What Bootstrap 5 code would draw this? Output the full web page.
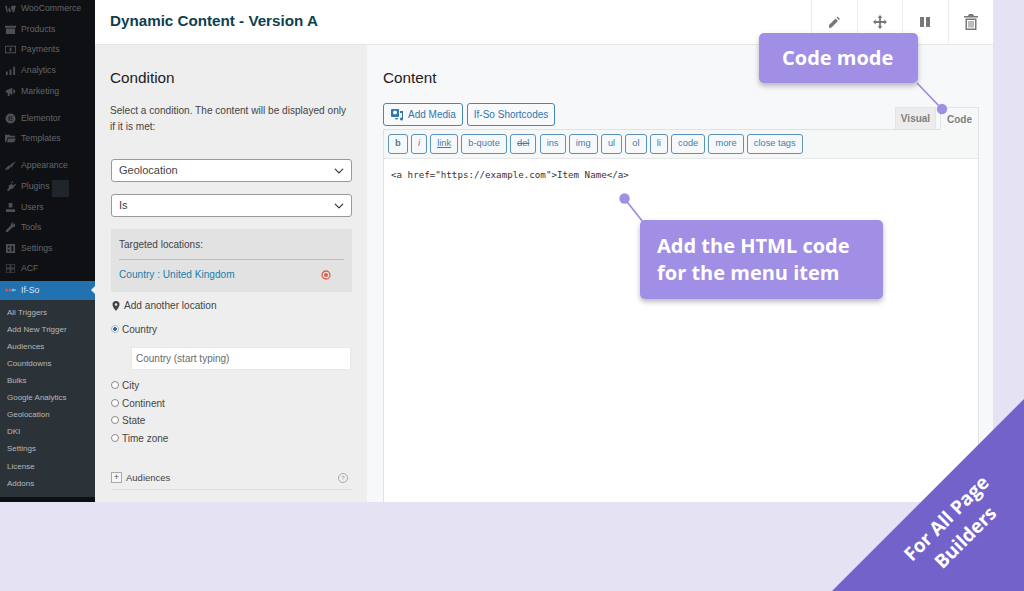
<!DOCTYPE html>
<html lang="en">
<head>
<meta charset="utf-8">
<title>Dynamic Content</title>
<link href="https://cdn.jsdelivr.net/npm/bootstrap@5.3.0/dist/css/bootstrap.min.css" rel="stylesheet">
<style>
html,body{height:100%}
body{margin:0;width:1024px;height:591px;overflow:hidden;background:#e4e2f3;font-family:"Liberation Sans",Arial,sans-serif;position:relative}
.shot{width:993px;height:502px;overflow:hidden}
.wpside{width:95px;background:#0e1013;font-size:8.7px;color:#62666b;flex:none}
.wpitem{height:20.6px;padding-left:5px;gap:5px}
.wpitem svg{width:11px;height:11px;flex:none;fill:#4c5054}
.wpsep{height:6.5px}
.wptop{margin-top:-3px;padding-top:1.500px}
.wpcur{height:19px;background:#2271b1;color:#dfe9f2;padding-left:5px;gap:5px;position:relative;margin-top:1.500px;font-size:8.7px}
.wpcur::after{content:"";position:absolute;right:0;top:5px;border:4px solid transparent;border-right-color:#f0f0f0;border-left:0}
.wpsub{background:#2c3338;padding:4px 0 5px 7px;color:#b4b9be;font-size:8px}
.wpsub div{height:17.1px;line-height:17.1px;white-space:nowrap}
.wpgap{position:absolute;left:52px;top:180px;width:17px;height:17px;background:#1f252b}
.mainarea{min-width:0}
.headbar{height:45px;background:#fff;border-bottom:1px solid #e6e6e6}
.titletext{font-size:15.2px;font-weight:700;color:#0d3f4f;margin:0 0 2px 15px;line-height:1}
.toolcell{width:45.5px;border-left:1px solid #ededed}
.toolcell svg{width:14px;height:14px;fill:#777}
.leftpane{width:272px;background:#eee;padding:24px 15px 0 15px;flex:none;color:#444}
.panehead{font-size:15.3px;font-weight:400;color:#1d1d1d;line-height:18px;margin:0}
.intro{font-size:10.1px;line-height:16px;margin:16px 0 24px;color:#444}
.selbox.form-select{font-size:11px;height:23px;line-height:1;padding:0 24px 0 7px;border:1px solid #9a9a9a;border-radius:3px;color:#444;background-size:12px 10px;background-position:right 6px center;margin-bottom:12px;width:241px;margin-left:1px}
.targetbox{background:#e2e2e2;height:63px;padding:9px 8px 0;width:241px;font-size:10px;margin:0 0 7px 1px}
.targetline{height:22px;border-bottom:1px solid #bdbdbd;line-height:14px}
.targetrow{color:#1a7ea8;height:29px;padding-right:13px;font-size:10.1px}
.addloc{font-size:10.1px;gap:4px;padding-left:2px;height:14px;margin:1px 0 9px}
.radiorow{font-size:10px;height:17.6px;gap:3px;padding-left:1px}
.radiorow .form-check-input{width:8px;height:8px;margin:3px 0 0;border-color:#8a8a8a;background-color:#fff;flex:none}
.radiorow .form-check-input:checked[type=radio]{background-color:#fff;border-color:#a9b4bf;background-image:radial-gradient(circle,#2271b1 0 42%,#fff 50%);background-size:100%}
.locinput.form-control{width:220px;height:23px;margin:7px 0 8.4px 21px;font-size:10px;padding:0 4px;border:1px solid #e8e8e8;border-radius:0;color:#666}
.locinput::placeholder{color:#6a6a6a}
.accord{border-bottom:1px solid #dedede;height:21px;margin:21px 0 0 1px;font-size:9.5px;gap:4px;width:241px;padding-bottom:3px}
.plusbox{width:11px;height:11px;border:1px solid #aaa;font-size:9px;line-height:9px;text-align:center;color:#555;background:#f5f5f5}
.helpdot{width:10px;height:10px;border:1px solid #aaa;border-radius:50%;font-size:6px;line-height:8px;text-align:center;color:#999;margin-left:auto;margin-right:4px}
.rightpane{background:#f7f8f9;padding:24px 14px 0 16px;min-width:0}
.mediabtn.btn{font-size:10px;height:23px;padding:0 6px;border:1px solid #4689b9;border-radius:3px;color:#2e76ad;background:#f8f9fa;gap:4px;line-height:1}
.medialine{gap:4px;margin-top:16px;height:23px}
.tablabel{font-size:10px;color:#808080;font-weight:700;height:22px;padding:0 5px}
.tabsbar{height:26px;margin-top:-23px;position:relative;gap:4px;align-items:flex-end}
.tabv{background:#ececec;border:1px solid #e4e4e4;border-bottom:0;width:41px}
.tabc{background:#f7f8f9;border:1px solid #e2e4e7;border-bottom:0;width:39px;margin-bottom:-1px;height:23px}
.editorwrap{border:1px solid #dfe2e5;border-bottom:0;height:374px;background:#fff;margin-top:0}
.edittools{background:#f6f7f7;border-bottom:1px solid #e6e7e8;height:29px;padding:4px 0 0 4px;gap:3.2px}
.edbtn.btn{height:20px;font-size:9.3px;padding:0 6px;border:1px solid #5b93bb;border-radius:3px;color:#3f7fae;background:#f7f8f9;line-height:1}
.codearea{font-family:"DejaVu Sans Mono","Liberation Mono",monospace;font-size:9.2px;color:#333;padding:9px 7px;white-space:pre}
.noteover{position:absolute;background:#a08fe5;color:#fff;font-family:"Open Sans","Noto Sans",sans-serif;font-weight:700;border-radius:5px;box-shadow:0 3px 5px rgba(70,60,90,.35);font-size:20px}
.notecode{left:759px;top:33px;width:159px;height:50px;padding-left:23px;line-height:50px}
.notehtml{left:640px;top:220px;width:243px;height:79px;padding:12px 0 0 17px;line-height:27px}
.leaders{position:absolute;left:0;top:0;width:1024px;height:591px}
.cornerflag{position:absolute;left:0;top:0;width:1024px;height:591px}
.flagtext{position:absolute;left:876px;top:501px;width:160px;text-align:center;color:#fff;font-family:"Open Sans","Noto Sans",sans-serif;font-weight:700;font-size:19px;line-height:27px;transform:rotate(-45deg)}
</style>
</head>
<body>
<div class="shot d-flex">
  <aside class="wpside position-relative">
    <div class="wptop">
    <div class="wpitem d-flex align-items-center"><svg viewBox="0 0 12 12"><path d="M0 3h2l1 6 2-5 1 5 1-6h5l-2 7H8.500L7.500 6 6 10H4.500L3.500 6 3 10H2z"/></svg>WooCommerce</div>
    <div class="wpitem d-flex align-items-center"><svg viewBox="0 0 12 12"><path d="M0 2h12v2H0zM1 5h10v6H1z"/></svg>Products</div>
    <div class="wpitem d-flex align-items-center"><svg viewBox="0 0 12 12"><path d="M0 2h12v8H0zM1 3v6h10V3zM5 4h2v4H5z"/></svg>Payments</div>
    <div class="wpitem d-flex align-items-center"><svg viewBox="0 0 12 12"><path d="M1 7h2v4H1zM5 5h2v6H5zM9 2h2v9H9z"/></svg>Analytics</div>
    <div class="wpitem d-flex align-items-center"><svg viewBox="0 0 12 12"><path d="M1 5l7-3v8L5 8v3H3V7.500L1 7zM9 4h2v4H9z"/></svg>Marketing</div>
    <div class="wpsep"></div>
    <div class="wpitem d-flex align-items-center"><svg viewBox="0 0 12 12"><path fill-rule="evenodd" d="M6 .5a5.500 5.500 0 1 0 0 11 5.500 5.500 0 0 0 0-11zM4 3.500h1v5H4zM6 3.500h2v1H6zM6 5.500h2v1H6zM6 7.500h2v1H6z"/></svg>Elementor</div>
    <div class="wpitem d-flex align-items-center"><svg viewBox="0 0 12 12"><path d="M0 2h5l1 1h5v2H3L1 10H0zM3.500 6H12l-2 4H2z"/></svg>Templates</div>
    <div class="wpsep"></div>
    <div class="wpitem d-flex align-items-center"><svg viewBox="0 0 12 12"><path d="M12 1L6 5 5 7 7 8zM4 6 1 9l-1 2 4-1 2-2z"/></svg>Appearance</div>
    <div class="wpitem d-flex align-items-center"><svg viewBox="0 0 12 12"><path d="M8 0l1 1-2 2 2 2 2-2 1 1-2 2-1 2-3 1-2 2-2-1 2-2 0-3 2-1z"/></svg>Plugins</div>
    <div class="wpitem d-flex align-items-center"><svg viewBox="0 0 12 12"><path d="M4 1h4v5H4zM1 8h10v3H1z"/></svg>Users</div>
    <div class="wpitem d-flex align-items-center"><svg viewBox="0 0 12 12"><path d="M11 1L9 3 8 2l2-2-3 1-1 3-5 5v2h2l5-5 3-1z"/></svg>Tools</div>
    <div class="wpitem d-flex align-items-center"><svg viewBox="0 0 12 12"><path fill-rule="evenodd" d="M1 1h10v10H1zM3 3v2h2V3zM7 3v6h2V3zM3 7v2h2V7z"/></svg>Settings</div>
    <div class="wpitem d-flex align-items-center"><svg viewBox="0 0 12 12"><path fill-rule="evenodd" d="M1 1h10v10H1zM2 2v3h3V2zM7 2v3h3V2zM2 7v3h3V7zM7 7v3h3V7z" opacity=".7"/></svg>ACF</div>
    </div>
    <div class="wpcur d-flex align-items-center"><svg width="11" height="6" viewBox="0 0 11 6"><circle cx="1.500" cy="3" r="1.500" fill="#d9534f"/><circle cx="5" cy="3" r="1.500" fill="#d9534f"/><circle cx="8" cy="3" r="1.500" fill="#5bc0de"/><circle cx="10" cy="3" r="1" fill="#5bc0de"/></svg><span>If-So</span></div>
    <div class="wpsub">
      <div>All Triggers</div><div>Add New Trigger</div><div>Audiences</div><div>Countdowns</div><div>Bulks</div><div>Google Analytics</div><div>Geolocation</div><div>DKI</div><div>Settings</div><div>License</div><div>Addons</div>
    </div>
    <div class="wpgap"></div>
  </aside>
  <div class="mainarea flex-grow-1 d-flex flex-column">
    <header class="headbar d-flex align-items-stretch flex-shrink-0">
      <div class="flex-grow-1 d-flex align-items-center"><h1 class="titletext">Dynamic Content - Version A</h1></div>
      <div class="toolcell d-flex align-items-center justify-content-center"><svg viewBox="0 0 14 14"><path d="M2 10l6.500-6.500 2.500 2.500L4.500 12.500 2 13zM9.500 2.500l1-1 2.500 2.500-1 1z"/></svg></div>
      <div class="toolcell d-flex align-items-center justify-content-center"><svg viewBox="0 0 14 14"><path d="M7 0l2.500 2.700H7.900v3.400h3.400V4.500L14 7l-2.700 2.500V7.900H7.900v3.400h1.600L7 14l-2.500-2.700h1.600V7.900H2.700v1.600L0 7l2.700-2.500v1.600h3.400V2.700H4.500z"/></svg></div>
      <div class="toolcell d-flex align-items-center justify-content-center"><svg viewBox="0 0 14 14"><path d="M2 2h4v10H2zM8 2h4v10H8z"/></svg></div>
      <div class="toolcell d-flex align-items-center justify-content-center"><svg viewBox="0 0 14 16" style="width:14px;height:16px"><path fill-rule="evenodd" d="M5 0h4l1 2h4v1.500H0V2h4zM1.500 4.500h11V16h-11zM3 6v8.500h8V6zM4.500 7h1v6.500h-1zM6.500 7h1v6.500h-1zM8.500 7h1v6.500h-1z"/></svg></div>
    </header>
    <div class="d-flex flex-grow-1">
      <section class="leftpane">
        <h2 class="panehead">Condition</h2>
        <p class="intro">Select a condition. The content will be displayed only if it is met:</p>
        <select class="form-select selbox"><option>Geolocation</option></select>
        <select class="form-select selbox"><option>Is</option></select>
        <div class="targetbox">
          <div class="targetline">Targeted locations:</div>
          <div class="targetrow d-flex align-items-center justify-content-between"><span>Country : United Kingdom</span>
            <svg width="10" height="10" viewBox="0 0 10 10"><circle cx="5" cy="5" r="4" fill="none" stroke="#e0604c" stroke-width="1.300"/><circle cx="5" cy="5" r="2" fill="#e0604c"/></svg></div>
        </div>
        <div class="addloc d-flex align-items-center"><svg width="8" height="10" viewBox="0 0 8 10"><path fill="#444" fill-rule="evenodd" d="M4 0a3.500 3.500 0 0 1 3.500 3.500C7.500 6 4 10 4 10S.5 6 .5 3.500A3.500 3.500 0 0 1 4 0zm0 2.200a1.300 1.300 0 1 0 0 2.600 1.300 1.300 0 0 0 0-2.600z"/></svg><span>Add another location</span></div>
        <div class="radiorow d-flex"><input class="form-check-input" type="radio" name="loc" checked><span>Country</span></div>
        <input class="form-control locinput d-block" placeholder="Country (start typing)">
        <div class="radiorow d-flex"><input class="form-check-input" type="radio" name="loc"><span>City</span></div>
        <div class="radiorow d-flex"><input class="form-check-input" type="radio" name="loc"><span>Continent</span></div>
        <div class="radiorow d-flex"><input class="form-check-input" type="radio" name="loc"><span>State</span></div>
        <div class="radiorow d-flex"><input class="form-check-input" type="radio" name="loc"><span>Time zone</span></div>
        <div class="accord d-flex align-items-center"><span class="plusbox">+</span><span>Audiences</span><span class="helpdot">?</span></div>
      </section>
      <section class="rightpane flex-grow-1">
        <h2 class="panehead">Content</h2>
        <div class="medialine d-flex">
          <button class="btn mediabtn d-flex align-items-center" type="button"><svg width="14" height="13" viewBox="0 0 14 13"><path fill="#2e76ad" fill-rule="evenodd" d="M2 1h6a1 1 0 0 1 1 1v6a1 1 0 0 1-1 1H2a1 1 0 0 1-1-1V2a1 1 0 0 1 1-1zM3 4.500a2 2 0 1 0 4 0 2 2 0 0 0-4 0zM10 3h3v8a1.500 1.500 0 1 1-1-1.400V5h-2zM5 10h3a1.500 1.500 0 1 1-3 0z"/></svg>Add Media</button>
          <button class="btn mediabtn" type="button">If-So Shortcodes</button>
        </div>
        <div class="tabsbar d-flex justify-content-end">
          <div class="tablabel tabv d-flex align-items-center justify-content-center">Visual</div>
          <div class="tablabel tabc d-flex align-items-center justify-content-center">Code</div>
        </div>
        <div class="editorwrap">
          <div class="edittools d-flex align-items-start">
            <button class="btn edbtn fw-bold" type="button">b</button>
            <button class="btn edbtn fst-italic" type="button">i</button>
            <button class="btn edbtn text-decoration-underline" type="button">link</button>
            <button class="btn edbtn" type="button">b-quote</button>
            <button class="btn edbtn text-decoration-line-through" type="button">del</button>
            <button class="btn edbtn" type="button">ins</button>
            <button class="btn edbtn" type="button">img</button>
            <button class="btn edbtn" type="button">ul</button>
            <button class="btn edbtn" type="button">ol</button>
            <button class="btn edbtn" type="button">li</button>
            <button class="btn edbtn" type="button">code</button>
            <button class="btn edbtn" type="button">more</button>
            <button class="btn edbtn" type="button">close tags</button>
          </div>
          <div class="codearea">&lt;a href="https://example.com"&gt;Item Name&lt;/a&gt;</div>
        </div>
      </section>
    </div>
  </div>
</div>
<svg class="cornerflag" viewBox="0 0 1024 591"><polygon points="1024,399 1024,591 832,591" fill="#7362c9"/></svg>
<div class="flagtext">For All Page<br>Builders</div>
<svg class="leaders" viewBox="0 0 1024 591"><g stroke="#9a88e2" stroke-width="1.600" fill="#a08fe5"><line x1="917" y1="83" x2="942" y2="109"/><line x1="624" y1="198" x2="643" y2="222"/></g><circle cx="942" cy="109" r="5.200" fill="#a08fe5"/><circle cx="624.500" cy="198.500" r="5.200" fill="#a08fe5"/></svg>
<div class="noteover notecode">Code mode</div>
<div class="noteover notehtml">Add the HTML code<br>for the menu item</div>
<script src="https://cdn.jsdelivr.net/npm/bootstrap@5.3.0/dist/js/bootstrap.bundle.min.js"></script>
</body>
</html>
